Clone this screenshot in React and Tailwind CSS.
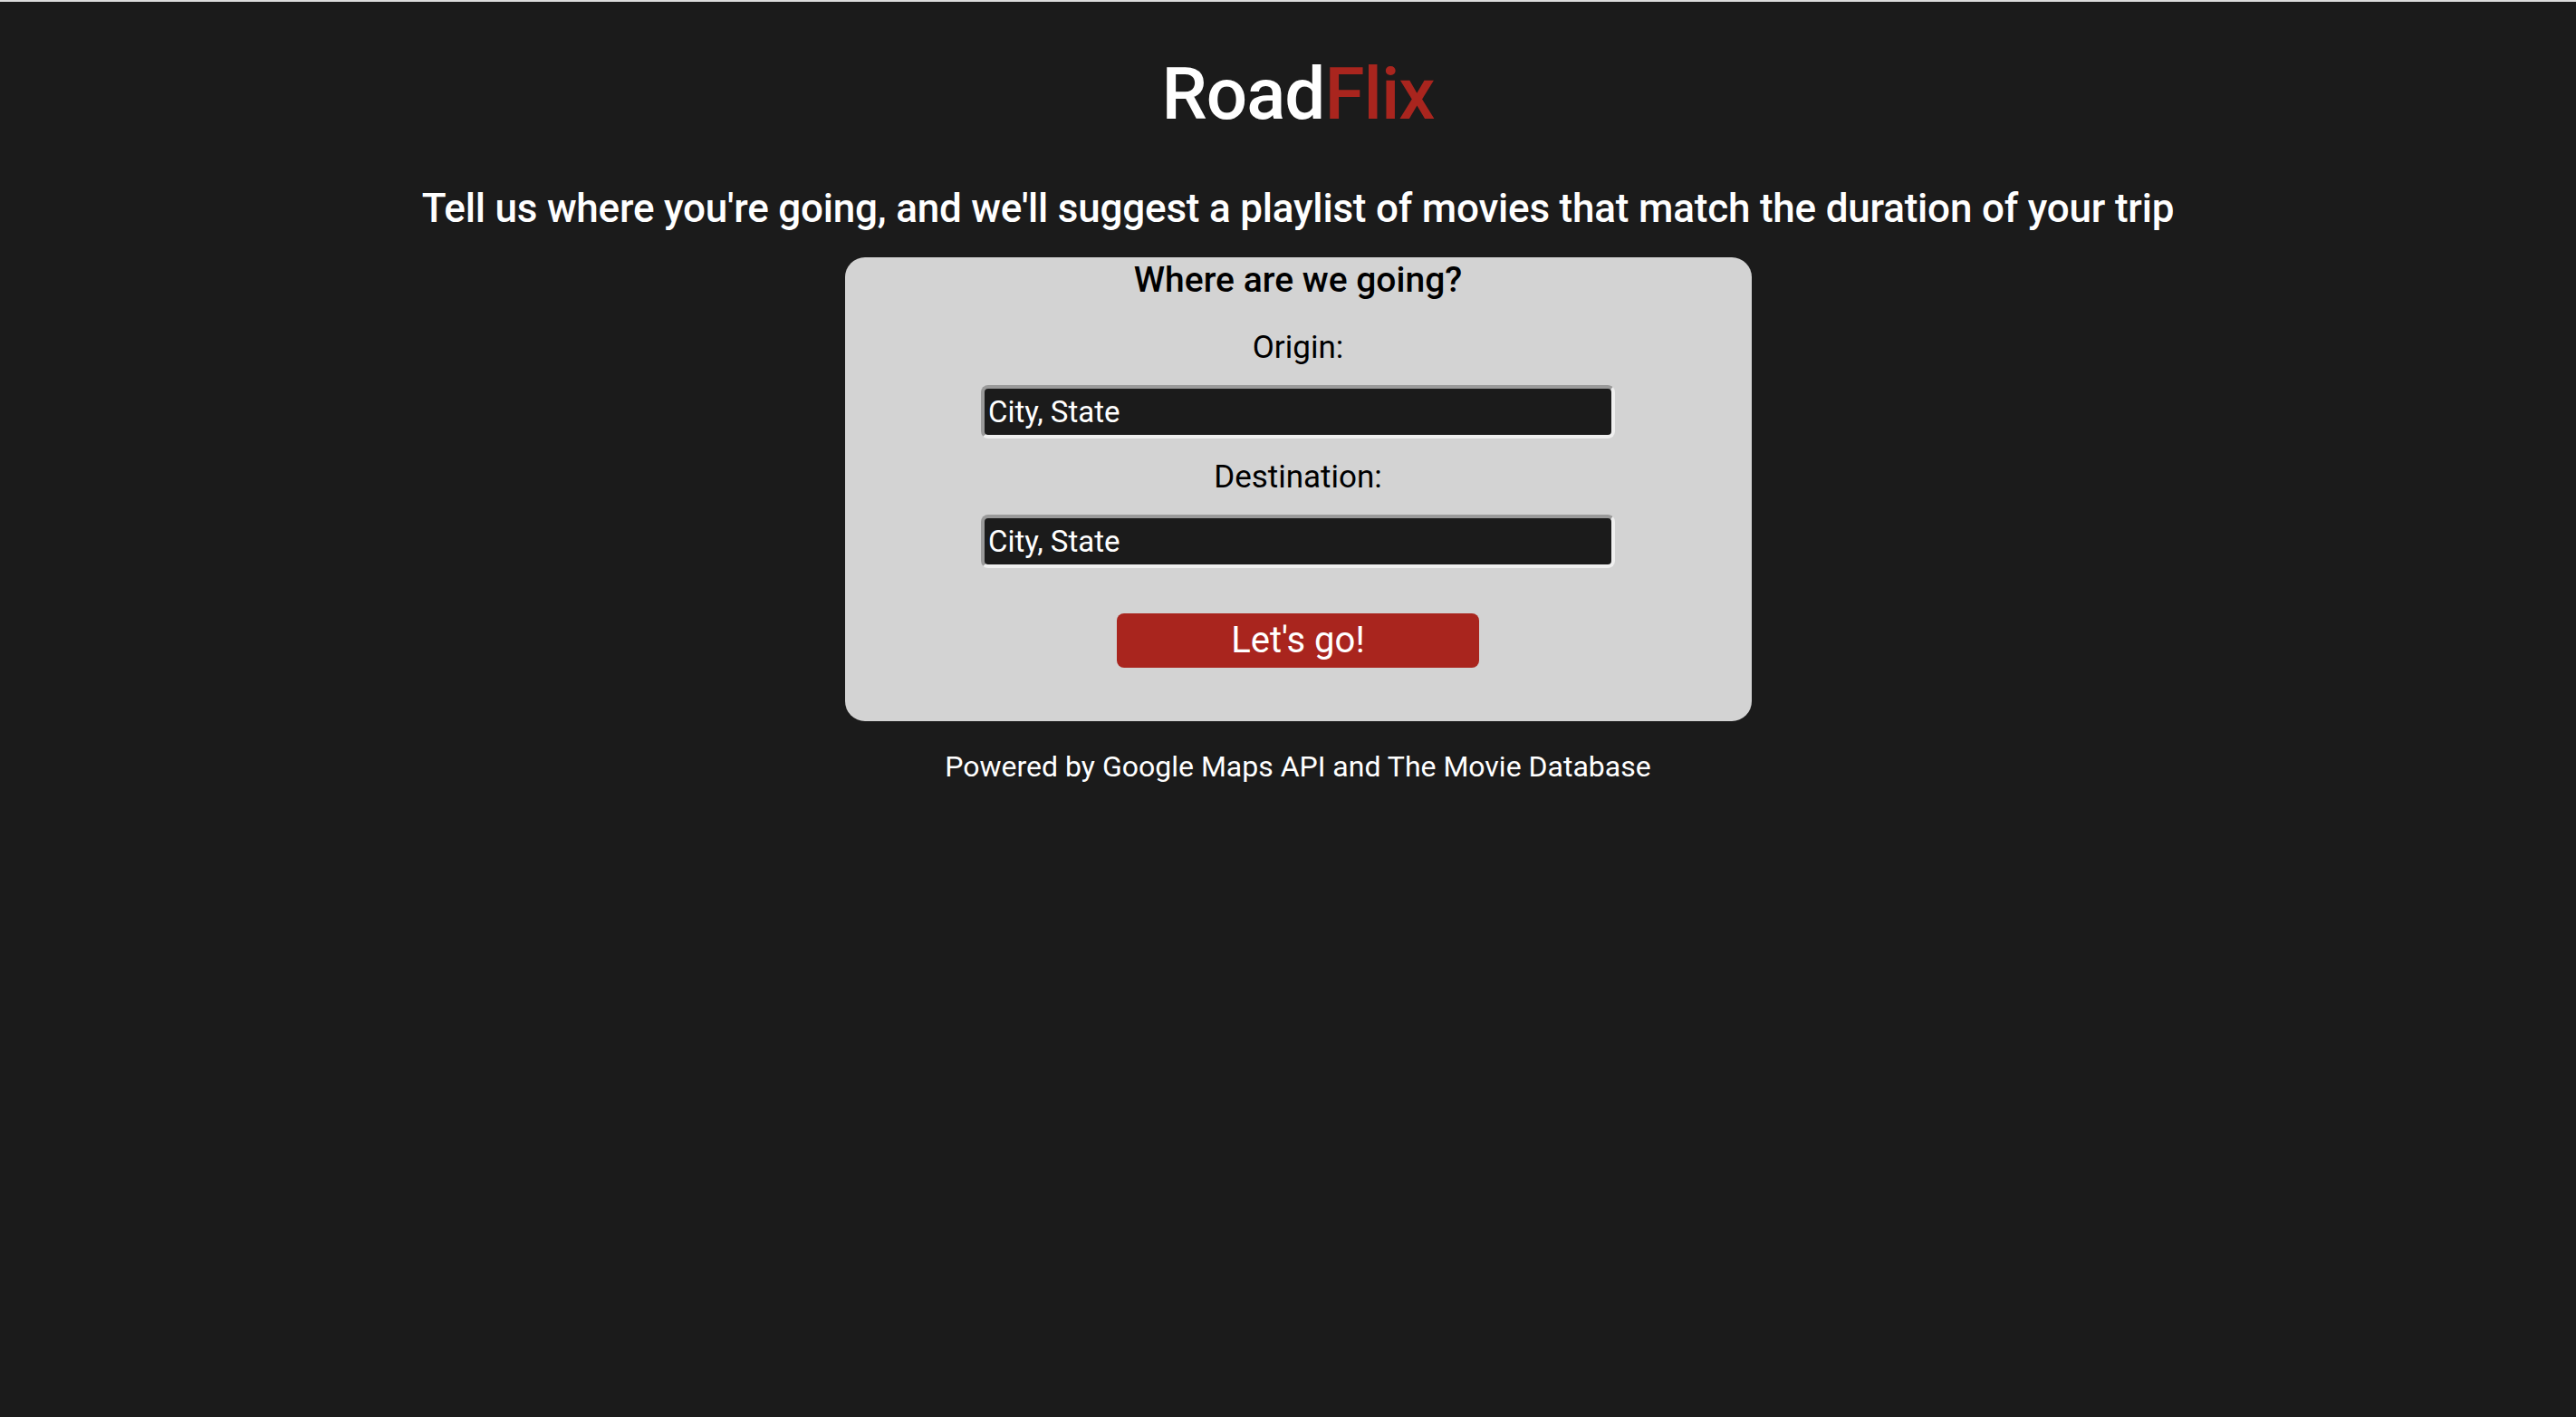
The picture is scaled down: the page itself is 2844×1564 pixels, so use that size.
import { useState } from "react";

const RED = "bg-[#a9251e]";

function Field({ label, value, onChange, first }) {
  return (
    <>
      <label
        className={`block text-[35px] leading-[35px] text-black ${first ? "mt-[37px]" : "mt-[25px]"}`}
      >
        {label}
      </label>
      <input
        type="text"
        value={value}
        onChange={(e) => onChange(e.target.value)}
        placeholder="City, State"
        className="mx-auto mt-[24px] block h-[59px] w-[700px] rounded-lg border-4 border-t-[#9a9a9a] border-l-[#9a9a9a] border-b-[#efefef] border-r-[#efefef] bg-[#1b1b1b] pl-1 text-[33px] text-white placeholder:text-white outline-none"
      />
    </>
  );
}

export default function App() {
  const [origin, setOrigin] = useState("");
  const [dest, setDest] = useState("");

  return (
    <div
      className="min-h-screen border-t-2 border-[#dcdcdc] bg-[#1b1b1b] pl-[22px] text-center text-white"
      style={{ fontFamily: "Roboto, 'Liberation Sans', sans-serif" }}
    >
      {/* Header */}
      <h1 className="pt-[62px] text-[80px] leading-[80px] font-medium tracking-[-1px]">
        Road<span className="text-[#a9251e]">Flix</span>
      </h1>
      <h2 className="mt-[64px] text-[44px] leading-[44px] font-medium tracking-[-0.2px]">
        Tell us where you're going, and we'll suggest a playlist of movies that match the duration of your trip
      </h2>

      {/* Trip form */}
      <form
        onSubmit={(e) => e.preventDefault()}
        className="mx-auto mt-[32px] w-[1001px] rounded-[22px] bg-[#d3d3d3] pt-[6px] pb-[59px]"
      >
        <h3 className="text-[39px] leading-[39px] font-medium text-black">Where are we going?</h3>
        <Field label="Origin:" value={origin} onChange={setOrigin} first />
        <Field label="Destination:" value={dest} onChange={setDest} />
        <button
          type="submit"
          className={`mx-auto mt-[50px] block h-[60px] w-[400px] rounded-lg ${RED} text-[40px] leading-[60px] text-white`}
        >
          Let's go!
        </button>
      </form>

      <p className="mt-[34px] text-[32px] leading-[32px]">
        Powered by Google Maps API and The Movie Database
      </p>
    </div>
  );
}
